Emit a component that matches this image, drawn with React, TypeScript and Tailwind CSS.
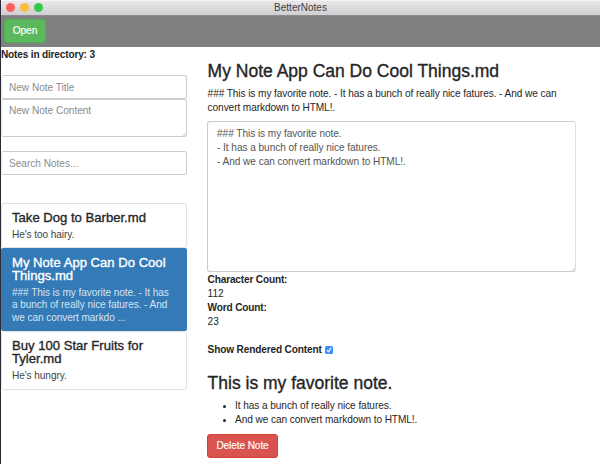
import React from "react";

const notes = [
  { title: ["Take Dog to Barber.md"], body: ["He's too hairy."], active: false },
  {
    title: ["My Note App Can Do Cool", "Things.md"],
    body: ["### This is my favorite note. - It has", "a bunch of really nice fatures. - And", "we can convert markdo ..."],
    active: true,
  },
  { title: ["Buy 100 Star Fruits for", "Tyler.md"], body: ["He's hungry."], active: false },
];

function TitleBar() {
  return (
    <header className="grid h-[15px] grid-cols-[1fr_auto_1fr] items-center rounded-tl-[3px] bg-linear-to-b from-[#ebe9eb] to-[#d0ced0] shadow-[inset_0_1px_0_#f4f4f4]">
      <div className="flex gap-[5px] pl-[5px]">
        <span className="size-[9px] rounded-full bg-[#fc605c]" />
        <span className="size-[9px] rounded-full bg-[#fdbc40]" />
        <span className="size-[9px] rounded-full bg-[#34c84a]" />
      </div>
      <h1 className="text-[10px] leading-[15px] tracking-normal text-[#414041]">BetterNotes</h1>
      <span />
    </header>
  );
}

function Grip() {
  return (
    <svg viewBox="0 0 5 5" className="pointer-events-none absolute right-px bottom-px size-[4px]" stroke="#b5b5b5" strokeWidth="0.8">
      <path d="M0.5 5 5 0.5M3 5 5 3" />
    </svg>
  );
}

function Sidebar() {
  return (
    <aside className="w-[186px] shrink-0">
      <p className="h-[28px] pt-px font-bold tracking-[-0.18px]">Notes in directory: 3</p>
      <input
        className="block h-[24px] w-full rounded-[3px] border border-[#ccc] border-l-[#e6e6e6] px-[7px] text-[10.1px] tracking-[-0.02px] placeholder:text-[#8c8c8c]"
        placeholder="New Note Title"
      />
      <div className="relative">
        <textarea
          className="block h-[38px] w-full resize-none rounded-[3px] border border-[#ccc] border-l-[#e6e6e6] px-[7px] py-[4px] text-[10.1px] leading-[14px] tracking-[-0.02px] placeholder:text-[#8c8c8c]"
          placeholder="New Note Content"
        />
        <Grip />
      </div>
      <input
        className="mt-[14px] block h-[24px] w-full rounded-[3px] border border-[#ccc] border-l-[#e6e6e6] px-[7px] text-[10.1px] tracking-[-0.02px] placeholder:text-[#8c8c8c]"
        placeholder="Search Notes..."
      />
      <ul className="mt-[28px]">
        {notes.map((note) => (
          <li
            key={note.title[0]}
            className={
              note.active
                ? "h-[83px] rounded-[2px] bg-[#337ab7] px-[11px] pt-[8px] text-white"
                : "rounded-[3px] border border-[#e2e2e2] px-[10px] pt-[7px] pb-[3px] last:pb-[4px]"
            }
          >
            <h4 className="text-[13.1px] leading-[13.5px] tracking-normal [-webkit-text-stroke:0.35px_currentColor]">
              {note.title.map((line) => (
                <span key={line} className="block whitespace-nowrap">{line}</span>
              ))}
            </h4>
            <p className={note.active ? "mt-[4px] leading-[12.6px] text-[#d3e4f2]" : "mt-[3px] h-[16px] leading-[13px] text-[#444]"}>
              {note.body.map((line) => (
                <span key={line} className="block whitespace-nowrap">{line}</span>
              ))}
            </p>
          </li>
        ))}
      </ul>
    </aside>
  );
}

function Detail() {
  return (
    <main className="ml-[20px] w-[369px] pt-[13px]">
      <h3 className="pl-[0.6px] text-[17.5px] leading-[22px] tracking-normal whitespace-nowrap [-webkit-text-stroke:0.35px_currentColor]">My Note App Can Do Cool Things.md</h3>
      <p className="mt-[5px] pl-[0.6px] whitespace-nowrap">
        ### This is my favorite note. - It has a bunch of really nice fatures. - And we can
        <br />
        convert markdown to HTML!.
      </p>
      <div className="relative mt-[6px]">
        <textarea
          className="block h-[151px] w-full resize-none rounded-[3px] border border-[#ccc] border-r-[#ddd] px-[9px] py-[5px] text-[10.1px] leading-[14px] tracking-[-0.05px] text-[#555]"
          defaultValue={"### This is my favorite note.\n- It has a bunch of really nice fatures.\n- And we can convert markdown to HTML!."}
        />
        <Grip />
      </div>
      <div className="pt-px pl-[0.6px]">
        <p className="font-bold tracking-[-0.17px]">Character Count:</p>
        <p>112</p>
        <p className="font-bold tracking-[-0.17px]">Word Count:</p>
        <p>23</p>
      </div>
      <label className="mt-[14px] flex h-[14px] items-center gap-[3px] pl-[0.6px] font-bold tracking-[-0.15px]">
        Show Rendered Content
        <span className="flex size-[8px] items-center justify-center rounded-[1.5px] bg-[#3a94f8]">
          <svg viewBox="0 0 8 8" className="size-[8px]" fill="none" stroke="white" strokeWidth="1.1">
            <path d="M2 4.2 3.4 5.8 6.1 1.9" />
          </svg>
        </span>
      </label>
      <h3 className="mt-[15px] pl-[0.6px] text-[17.5px] leading-[22px] tracking-normal whitespace-nowrap [-webkit-text-stroke:0.35px_currentColor]">This is my favorite note.</h3>
      <ul className="mt-[5px] list-disc pl-[28.1px] tracking-[-0.08px] marker:text-[9px]">
        <li>It has a bunch of really nice fatures.</li>
        <li>And we can convert markdown to HTML!.</li>
      </ul>
      <button className="mt-[7px] block h-[24px] w-[71px] rounded-[3px] border border-[#d43f3a] bg-[#d9534f] text-[10.1px] tracking-[-0.1px] whitespace-nowrap text-white [-webkit-text-stroke:0.15px_white]">
        Delete Note
      </button>
    </main>
  );
}

export default function App() {
  return (
    <div className="h-[464px] w-[600px] overflow-hidden border-l border-[#2c2b35] bg-white font-['Liberation_Sans',Arial,sans-serif] text-[10.1px] leading-[14px] tracking-[-0.08px] text-[#262626]">
      <TitleBar />
      <nav className="h-[32px] border-t border-[#8c8c8c] bg-[#808080] pt-[3px] pl-[3px]">
        <button className="block h-[24px] w-[42px] rounded-[3px] border border-[#4cae4c] bg-[#5cb85c] text-[10.1px] tracking-[-0.02px] text-white [-webkit-text-stroke:0.15px_white]">Open</button>
      </nav>
      <div className="flex">
        <Sidebar />
        <Detail />
      </div>
    </div>
  );
}
